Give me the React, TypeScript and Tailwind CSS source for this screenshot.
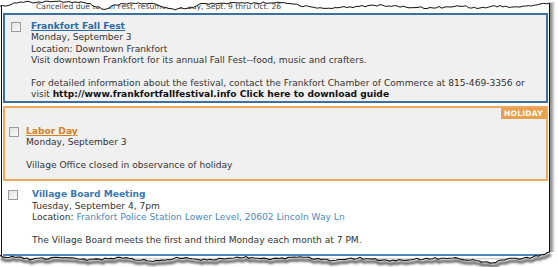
import React from 'react'

const font = { fontFamily: '"DejaVu Sans", Verdana, sans-serif' }

// jagged torn-paper line from a few control points plus a little jitter
function jag(points: [number, number][], seed: number) {
  const out: [number, number][] = []
  for (let i = 0; i < points.length - 1; i++) {
    const [x1, y1] = points[i]
    const [x2, y2] = points[i + 1]
    const steps = Math.max(1, Math.round((x2 - x1) / 3))
    for (let s = 0; s < steps; s++) {
      const t = s / steps
      const x = x1 + (x2 - x1) * t
      const n = Math.sin((x + seed) * 12.9898) * 43758.5453
      const r = n - Math.floor(n)
      out.push([x, y1 + (y2 - y1) * t + (r - 0.5) * 2])
    }
  }
  out.push(points[points.length - 1])
  return out
}

const topPts = jag(
  [
    [0, 6], [8, 5], [14, 3], [30, 2], [60, 2], [90, 3], [96, 7], [105, 9],
    [115, 5], [130, 4], [150, 3], [160, 6], [175, 9], [190, 8], [200, 4],
    [230, 3], [260, 3], [290, 3], [300, 6], [320, 8], [350, 7], [380, 5],
    [400, 7], [430, 8], [460, 6], [480, 8], [500, 6], [520, 7], [540, 5], [550, 3],
  ],
  3
)

const bottomPts = jag(
  [
    [0, 256], [15, 257], [30, 259], [60, 258], [90, 260], [120, 258],
    [150, 261], [180, 258], [210, 260], [240, 257], [270, 259], [300, 257],
    [330, 260], [360, 258], [390, 261], [420, 259], [450, 258], [470, 260],
    [490, 263], [510, 259], [530, 258], [550, 252],
  ],
  7
)

const toD = (p: [number, number][]) =>
  p.map(([x, y], i) => `${i ? 'L' : 'M'}${x.toFixed(1)} ${y.toFixed(1)}`).join(' ')

function Checkbox() {
  return (
    <div className="w-[10px] h-[10px] shrink-0 border border-[#9c9c9c] bg-gradient-to-br from-[#e2e2e2] to-[#fafafa]" />
  )
}

function TornEdges() {
  const topD = toD(topPts)
  const botD = toD(bottomPts)
  return (
    <svg
      className="absolute top-0 left-0 pointer-events-none"
      width="558"
      height="267"
      viewBox="0 0 558 267"
    >
      <defs>
        <filter id="soft" x="-5%" y="-50%" width="110%" height="200%">
          <feGaussianBlur stdDeviation="1.2" />
        </filter>
      </defs>
      {/* top: white above the tear */}
      <path d={`${topD} L558 0 L0 0 Z`} fill="#fff" />
      <path d={topD} fill="none" stroke="#111" strokeWidth="1" />
      {/* bottom: white below the tear, then shadow */}
      <path d={`${botD} L558 252 L558 267 L0 267 Z`} fill="#fff" />
      <path d={botD} transform="translate(1 3)" fill="none" stroke="#666" strokeWidth="3" filter="url(#soft)" />
      <path d={botD} fill="none" stroke="#111" strokeWidth="1.1" />
    </svg>
  )
}

export default function App() {
  return (
    <div className="relative w-[558px] h-[267px] bg-white overflow-hidden text-[#333] text-[9.1px] leading-[11.4px]" style={font}>
      <div className="ml-[1px] w-[549px] h-[258px] border-l border-r border-[#111] shadow-[3px_0_3px_rgba(0,0,0,0.45)]">
        <div className="h-[13px] pt-[1px] pl-[34px] text-[#444] text-[7.6px] whitespace-nowrap">
          Cancelled due to Fall Fest, resumes Sunday, Sept. 9 thru Oct. 26
        </div>

        <div className="mx-[1px] border-2 border-[#3b70a0] bg-[#f0f0f0] pt-[6px] pl-[6px] flex gap-[10px]">
          <div className="pt-[1px]">
            <Checkbox />
          </div>
          <div>
            <div className="font-bold text-[#2c6ca5] underline">Frankfort Fall Fest</div>
            <div>Monday, September 3</div>
            <div>Location: Downtown Frankfort</div>
            <div>Visit downtown Frankfort for its annual Fall Fest--food, music and crafters.</div>
            <div className="h-[11.4px]" />
            <div className="whitespace-nowrap">
              For detailed information about the festival, contact the Frankfort Chamber of Commerce at 815-469-3356 or
            </div>
            <div>
              visit <span className="font-bold text-[#111]">http://www.frankfortfallfestival.info Click here to download guide</span>
            </div>
          </div>
        </div>

        <div className="mt-[3px] mx-[1px] border-2 border-[#eea85c] bg-[#f0f0f0] pb-[8px]">
          <div className="flex justify-end">
            <div className="h-[11px] px-[3px] bg-[#e9a04d] text-white font-bold text-[7.5px] leading-[11px] tracking-[0.3px]">
              HOLIDAY
            </div>
          </div>
          <div className="mt-[7px] pl-[4px] flex gap-[7px]">
            <div className="pt-[1px]">
              <Checkbox />
            </div>
            <div>
              <div className="font-bold text-[#d5801f] underline">Labor Day</div>
              <div>Monday, September 3</div>
              <div className="h-[11.4px]" />
              <div>Village Office closed in observance of holiday</div>
            </div>
          </div>
        </div>

        <div className="mt-[8px] pl-[6px] flex gap-[14px]">
          <div className="pt-[1px]">
            <Checkbox />
          </div>
          <div>
            <div className="font-bold text-[#3a79b3]">Village Board Meeting</div>
            <div>Tuesday, September 4, 7pm</div>
            <div>
              Location: <span className="text-[#4a88bf]">Frankfort Police Station Lower Level, 20602 Lincoln Way Ln</span>
            </div>
            <div className="h-[11.4px]" />
            <div>The Village Board meets the first and third Monday each month at 7 PM.</div>
          </div>
        </div>

        <div className="mt-[8px] mx-[1px] h-[4px] border-t-2 border-[#4f87b8]" />
      </div>
      <TornEdges />
    </div>
  )
}
